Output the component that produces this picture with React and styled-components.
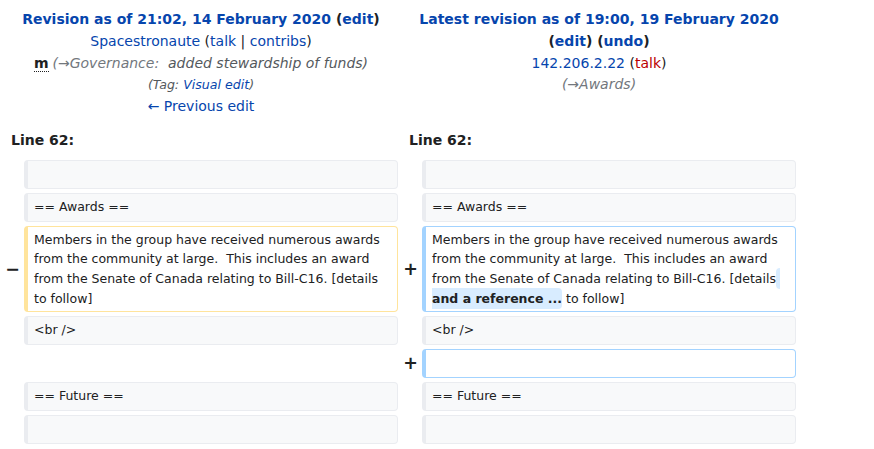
import styled, { createGlobalStyle, css } from "styled-components";

const GlobalStyle = createGlobalStyle`
  body {
    margin: 0;
    background: #ffffff;
    font-family: "DejaVu Sans", sans-serif;
    font-size: 14px;
    color: #202122;
  }
`;

const DiffGrid = styled.div`
  width: 800px;
  box-sizing: border-box;
  padding: 4px;
  display: grid;
  grid-template-columns: 16px 374px 16px 374px;
  gap: 4px;
  line-height: 1.6;
`;

const Title = styled.div`
  grid-column: span 2;
  text-align: center;
  padding: 5px 1px 1px;
  line-height: 21.8px;
`;

const Line = styled.div`
  font-weight: ${(p) => (p.bold ? "bold" : "normal")};
  white-space: pre-wrap;
`;

const Link = styled.a`
  color: ${(p) => (p.red ? "#ba0000" : "#0645ad")};
  text-decoration: none;
`;

const Minor = styled.abbr`
  font-weight: bold;
  text-decoration: none;
  border-bottom: 1px dotted #202122;
  margin-right: 4px;
`;

const Comment = styled.span`
  font-style: italic;
  color: #54595d;
`;

const Auto = styled.span`
  color: #72777d;
`;

const Tags = styled.div`
  font-style: italic;
  font-size: 90%;
  color: #54595d;
`;

const LineNo = styled.div`
  grid-column: span 2;
  font-weight: bold;
  padding: 6.5px 7px 4px;
`;

const Marker = styled.div`
  display: flex;
  align-items: center;
  justify-content: flex-end;
  font-weight: bold;
  font-size: 1.25em;
  line-height: 1.2;
`;

const Empty = styled.div`
  grid-column: span 2;
`;

const borders = {
  context: "#eaecf0",
  deleted: "#ffe49c",
  added: "#a3d3ff",
};

const Cell = styled.div`
  box-sizing: border-box;
  font-size: 12.5px;
  line-height: 19.6px;
  min-height: 29px;
  padding: 3px 6px;
  border: 1px solid ${(p) => borders[p.kind]};
  border-left-width: 4px;
  border-radius: 4px;
  white-space: pre-wrap;
  word-wrap: break-word;
  ${(p) =>
    p.kind === "context"
      ? css`
          background: #f8f9fa;
          color: #202122;
        `
      : css`
          background: #ffffff;
          color: #202122;
        `}
`;

const Change = styled.ins`
  text-decoration: none;
  font-weight: bold;
  background: #d8ecff;
  border-radius: 4px;
  padding: 0.25em 0;
`;

const ContextRow = ({ text }) => (
  <>
    <Marker />
    <Cell kind="context">{text}</Cell>
    <Marker />
    <Cell kind="context">{text}</Cell>
  </>
);

const oldText =
  "Members in the group have received numerous awards from the community at large.  This includes an award from the Senate of Canada relating to Bill-C16. [details to follow]";

export default function App() {
  return (
    <>
      <GlobalStyle />
      <DiffGrid>
        <Title>
          <Line bold>
            <Link href="#">Revision as of 21:02, 14 February 2020</Link> (
            <Link href="#">edit</Link>)
          </Line>
          <Line>
            <Link href="#">Spacestronaute</Link> (<Link href="#">talk</Link> |{" "}
            <Link href="#">contribs</Link>)
          </Line>
          <Line>
            <Minor title="This is a minor edit">m</Minor>
            <Comment>
              <Auto>(→Governance:</Auto>
              {"  added stewardship of funds)"}
            </Comment>
          </Line>
          <Tags>
            (Tag: <Link href="#">Visual edit</Link>)
          </Tags>
          <Line>
            <Link href="#">← Previous edit</Link>
          </Line>
        </Title>
        <Title>
          <Line bold>
            <Link href="#">Latest revision as of 19:00, 19 February 2020</Link>
          </Line>
          <Line bold>
            (<Link href="#">edit</Link>) (<Link href="#">undo</Link>)
          </Line>
          <Line>
            <Link href="#">142.206.2.22</Link> (
            <Link href="#" red>
              talk
            </Link>
            )
          </Line>
          <Line>
            <Comment>
              <Auto>(→Awards)</Auto>
            </Comment>
          </Line>
        </Title>

        <LineNo>Line 62:</LineNo>
        <LineNo>Line 62:</LineNo>

        <ContextRow text="" />
        <ContextRow text="== Awards ==" />

        <Marker>−</Marker>
        <Cell kind="deleted">{oldText}</Cell>
        <Marker>+</Marker>
        <Cell kind="added">
          {"Members in the group have received numerous awards from the community at large.  This includes an award from the Senate of Canada relating to Bill-C16. [details"}
          <Change> and a reference ...</Change>
          {" to follow]"}
        </Cell>

        <ContextRow text="<br />" />

        <Empty />
        <Marker>+</Marker>
        <Cell kind="added"></Cell>

        <ContextRow text="== Future ==" />
        <ContextRow text="" />
      </DiffGrid>
    </>
  );
}
